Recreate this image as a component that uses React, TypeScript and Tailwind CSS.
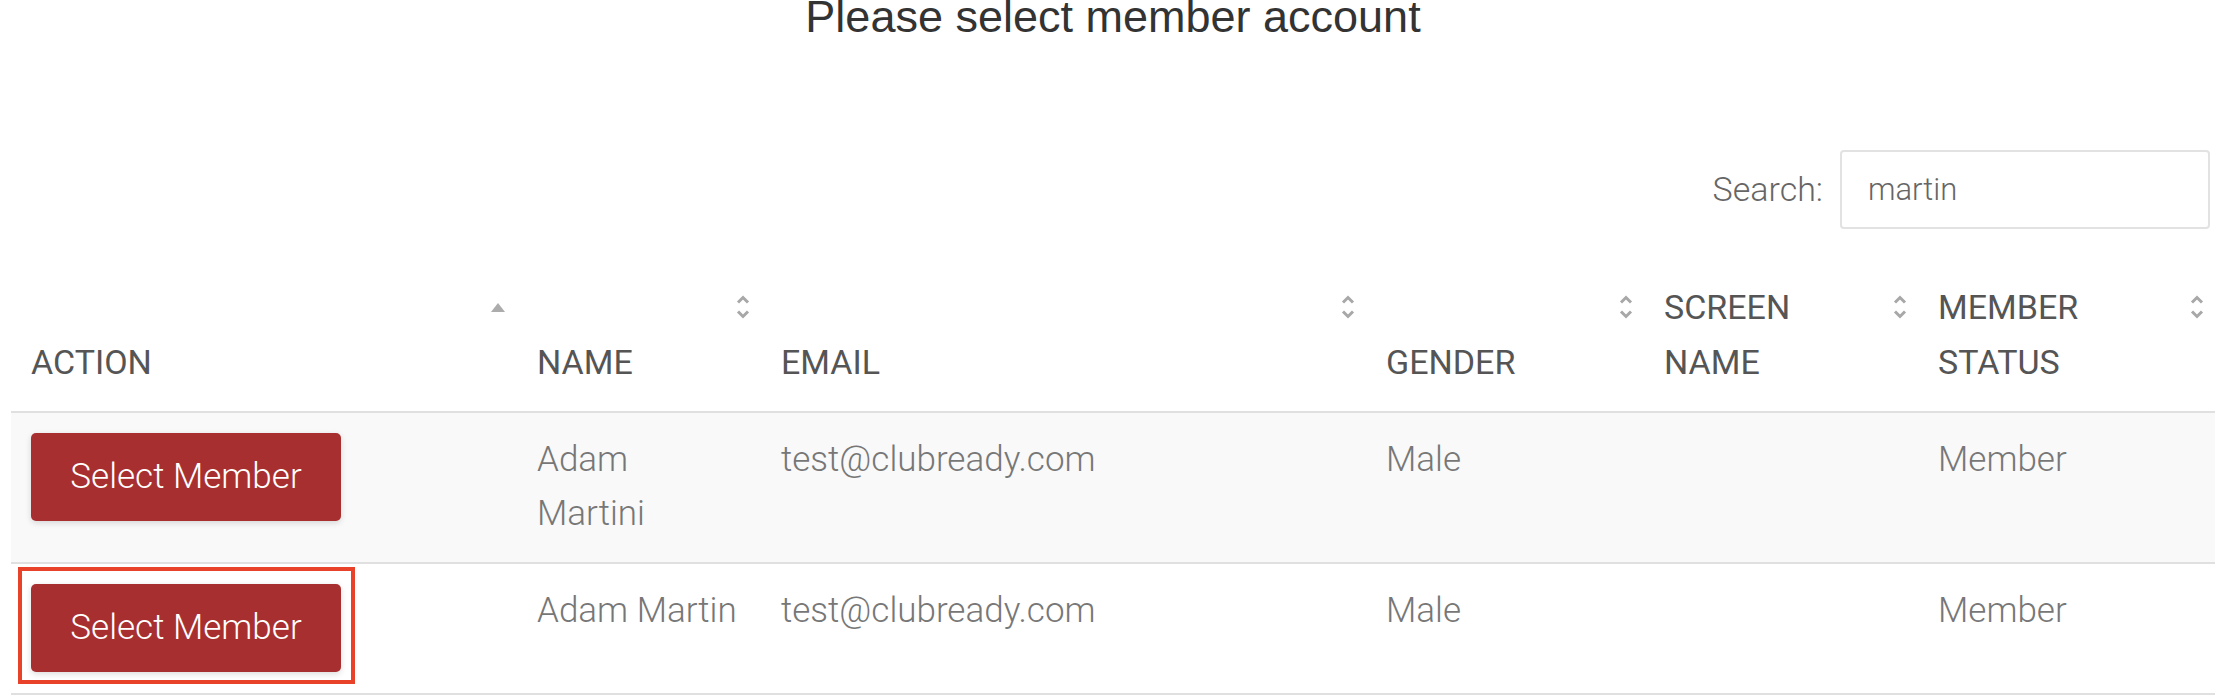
import React from 'react';

type Member = {
  id: number;
  name: string;
  email: string;
  gender: string;
  screenName: string;
  status: string;
  highlighted?: boolean;
};

const members: Member[] = [
  { id: 1, name: 'Adam Martini', email: 'test@clubready.com', gender: 'Male', screenName: '', status: 'Member' },
  { id: 2, name: 'Adam Martin', email: 'test@clubready.com', gender: 'Male', screenName: '', status: 'Member', highlighted: true },
];

const columns = [
  { key: 'action', label: 'ACTION', width: 'w-[506px]', sort: 'asc' },
  { key: 'name', label: 'NAME', width: 'w-[244px]', sort: 'both' },
  { key: 'email', label: 'EMAIL', width: 'w-[605px]', sort: 'both' },
  { key: 'gender', label: 'GENDER', width: 'w-[278px]', sort: 'both' },
  { key: 'screen', label: 'SCREEN NAME', width: 'w-[274px]', sort: 'both' },
  { key: 'status', label: 'MEMBER STATUS', width: 'w-[297px]', sort: 'both' },
];

const SortIcon = ({ sort }: { sort: string }) => {
  if (sort === 'asc') {
    return (
      <svg className="absolute right-[12px] top-[43px]" width="14" height="9" viewBox="0 0 14 9">
        <polygon points="7,0 14,9 0,9" fill="#acacac" />
      </svg>
    );
  }
  return (
    <svg className="absolute right-[11px] top-[34px]" width="14" height="26" viewBox="0 0 14 26" fill="none">
      <polyline points="2,8.5 7,3.5 12,8.5" stroke="#a8a8a8" strokeWidth="3" />
      <polyline points="2,17.5 7,22.5 12,17.5" stroke="#a8a8a8" strokeWidth="3" />
    </svg>
  );
};

const cell = 'pb-[21px] pl-[20px] pr-[20px] pt-[20px] align-top text-[35px] font-light leading-[54px] text-[#777]';

const App: React.FC = () => {
  return (
    <div className="min-h-[700px] overflow-hidden bg-white px-[11px] font-['Roboto',sans-serif]">
      <h1 className="-mt-[6px] text-center font-['Liberation_Sans',Arial,sans-serif] text-[45px] leading-[45px] text-[#333]">
        Please select member account
      </h1>

      <div className="mt-[111px] flex items-center justify-end gap-[17px] pr-[5px]">
        <label className="text-[34px] font-light text-[#666]">Search:</label>
        <input
          readOnly
          value="martin"
          className="h-[79px] w-[370px] rounded-[4px] border-2 border-[#e2e2e2] px-[26px] text-[31px] font-light text-[#666] outline-none"
        />
      </div>

      <table className="mt-[31px] w-full table-fixed border-collapse">
        <thead>
          <tr className="border-b-2 border-[#e0e0e0]">
            {columns.map((col) => (
              <th
                key={col.key}
                className={`${col.width} relative pb-[21px] pl-[20px] pr-[30px] pt-[20px] text-left align-bottom text-[34px] font-normal leading-[55px] text-[#555]`}
              >
                {col.label}
                <SortIcon sort={col.sort} />
              </th>
            ))}
          </tr>
        </thead>
        <tbody>
          {members.map((m, i) => (
            <tr key={m.id} className={`border-b-2 border-[#e0e0e0] ${i % 2 === 0 ? 'bg-[#f9f9f9]' : 'bg-white'}`}>
              <td className="pb-[21px] pl-[20px] pt-[20px] align-top">
                <div className="relative w-fit">
                  <button className="block h-[88px] w-[310px] rounded-[5px] bg-[#a82f2f] text-[35px] font-light text-white shadow-[0_2px_6px_rgba(0,0,0,0.14)]">
                    Select Member
                  </button>
                  {m.highlighted && (
                    <div className="pointer-events-none absolute -bottom-[12px] -left-[13px] -right-[14px] -top-[17px] border-4 border-[#e8432a]" />
                  )}
                </div>
              </td>
              <td className={cell}>{m.name}</td>
              <td className={cell}>{m.email}</td>
              <td className={cell}>{m.gender}</td>
              <td className={cell}>{m.screenName}</td>
              <td className={cell}>{m.status}</td>
            </tr>
          ))}
        </tbody>
      </table>
    </div>
  );
};

export default App;
